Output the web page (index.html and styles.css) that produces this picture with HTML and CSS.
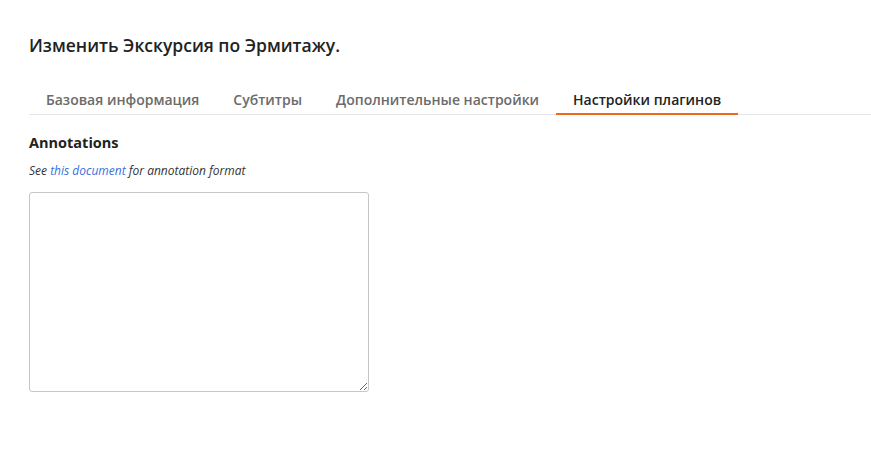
FILE: index.html
```html
<!DOCTYPE html>
<html lang="ru">
<head>
<meta charset="utf-8">
<title>Изменить Экскурсия по Эрмитажу.</title>
<link rel="stylesheet" href="styles.css">
</head>
<body>
<main class="page">
  <h1 class="title">Изменить Экскурсия по Эрмитажу.</h1>
  <nav class="tabs">
    <a class="tab">Базовая информация</a>
    <a class="tab">Субтитры</a>
    <a class="tab">Дополнительные настройки</a>
    <a class="tab tab-active">Настройки плагинов</a>
  </nav>
  <section class="panel">
    <h2 class="label">Annotations</h2>
    <p class="help">See <a class="link">this document</a> for annotation format</p>
    <textarea class="field"></textarea>
  </section>
</main>
</body>
</html>
```

FILE: styles.css
```css
html, body {
  margin: 0;
  padding: 0;
  background: #fff;
}
body {
  font-family: "Open Sans", "Noto Sans", sans-serif;
  color: #222;
}
.page {
  padding: 33px 0 0 29px;
}
.title {
  margin: 0;
  font-size: 17.5px;
  font-weight: 600;
  line-height: 24px;
  color: #222;
}
.tabs {
  display: flex;
  margin-top: 33px;
  border-bottom: 1px solid #e3e3e8;
}
.tab {
  padding: 0 17px 3px;
  font-size: 14px;
  font-weight: 600;
  line-height: 20px;
  color: #6b6b6b;
  border-bottom: 2px solid transparent;
  margin-bottom: -1px;
}
.tab-active {
  color: #222;
  border-bottom-color: #ef6a16;
}
.panel {
  display: flex;
  flex-direction: column;
  align-items: flex-start;
}
.label {
  margin: 18px 0 0;
  font-size: 14.5px;
  font-weight: 700;
  line-height: 20px;
  color: #222;
}
.help {
  margin: 10px 0 0;
  font-size: 12px;
  font-style: italic;
  line-height: 16px;
  color: #333;
}
.link {
  color: #3a6fe0;
}
.field {
  margin-top: 13px;
  width: 340px;
  height: 200px;
  box-sizing: border-box;
  border: 1px solid #c6c6c6;
  border-radius: 3px;
  padding: 4px;
  font-family: inherit;
  resize: both;
}
```
